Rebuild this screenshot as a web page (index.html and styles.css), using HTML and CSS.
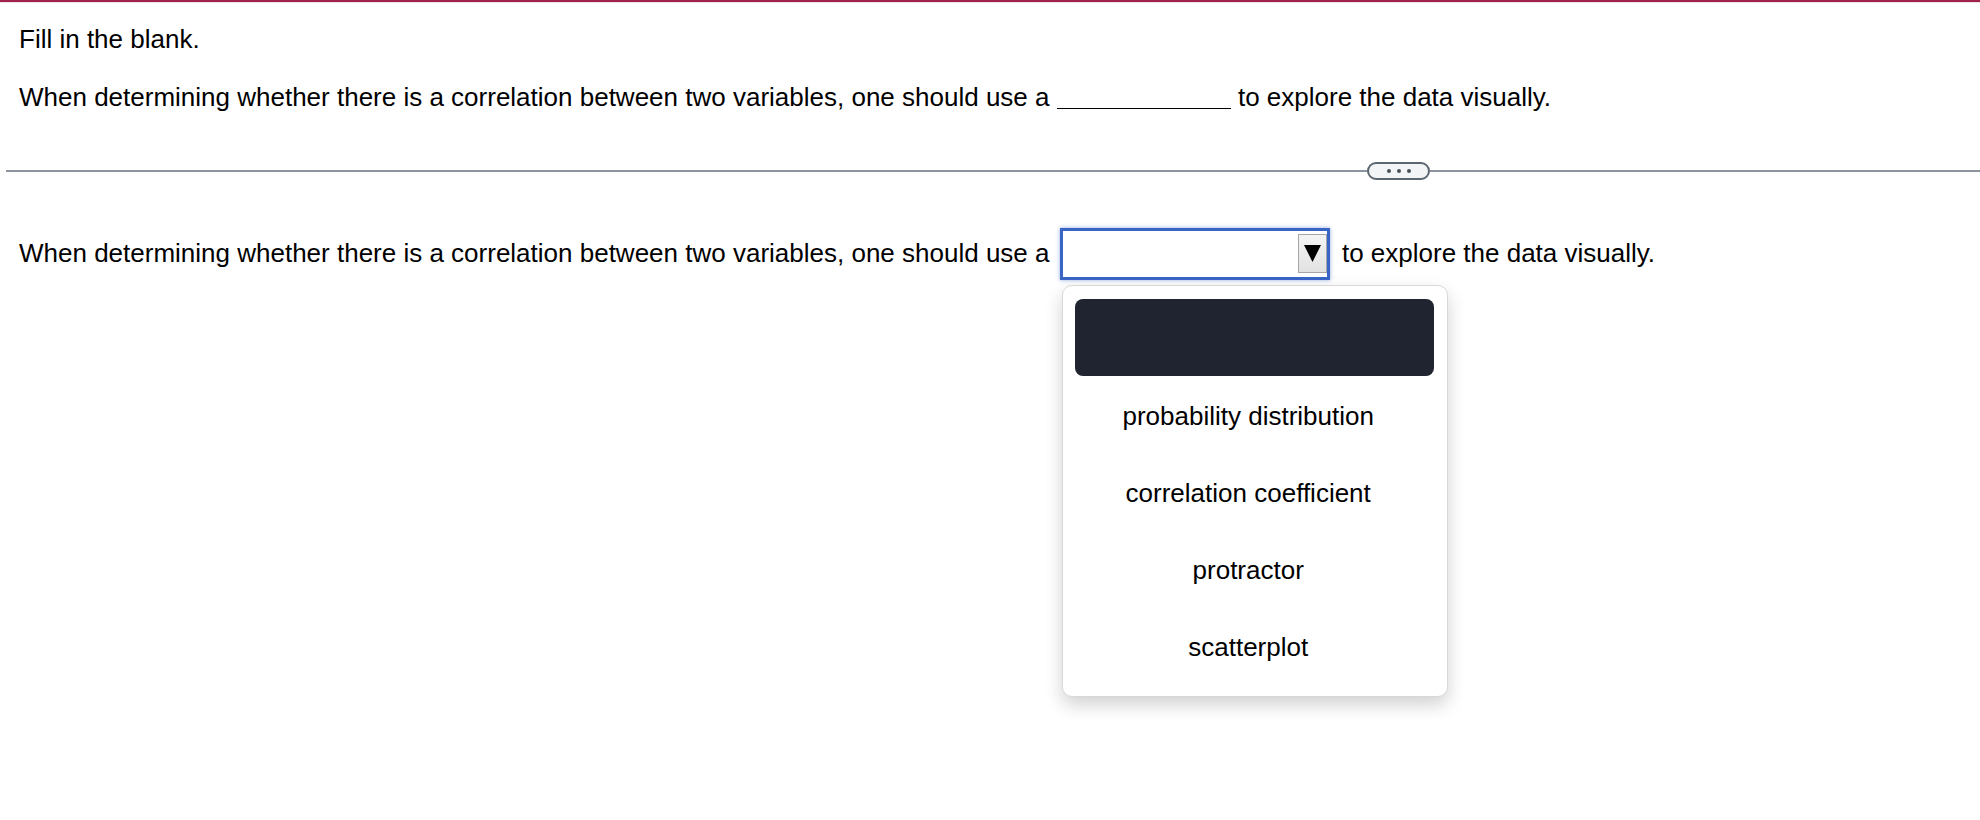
FILE: index.html
```html
<!DOCTYPE html>
<html lang="en">
<head>
<meta charset="utf-8">
<title>Fill in the blank</title>
<link rel="stylesheet" href="styles.css">
</head>
<body>
<div class="topbar"></div>
<main class="content">
  <p class="instr">Fill in the blank.</p>
  <p class="q1">When determining whether there is a correlation between two variables, one should use a <span class="blank"></span> to explore the data visually.</p>
</main>
<div class="divider">
  <div class="line line-left"></div>
  <button class="pill" type="button" aria-label="more"><span class="dot"></span><span class="dot"></span><span class="dot"></span></button>
  <div class="line line-right"></div>
</div>
<main class="content">
  <p class="q2">When determining whether there is a correlation between two variables, one should use a <span class="select-wrap"><span class="select"><span class="select-btn"><svg width="19" height="19" viewBox="0 0 19 19"><polygon points="1,1 18,1 9.5,18" fill="#000"/></svg></span></span><span class="menu"><span class="item item-active"></span><span class="item">probability distribution</span><span class="item">correlation coefficient</span><span class="item">protractor</span><span class="item">scatterplot</span></span></span> to explore the data visually.</p>
</main>
</body>
</html>
```

FILE: styles.css
```css
html, body {
  margin: 0;
  padding: 0;
  background: #ffffff;
}
body {
  font-family: "Liberation Sans", Arial, Helvetica, sans-serif;
  font-size: 26px;
  color: #000;
  width: 1980px;
  height: 820px;
  overflow: hidden;
}
.topbar {
  height: 2px;
  background: #a3214d;
  border-bottom: 1px solid #e6e6e6;
}
.content {
  display: block;
  padding: 0 19px;
}
.instr {
  margin: 21px 0 0;
  line-height: 30px;
}
.q1 {
  margin: 28px 0 0;
  line-height: 30px;
}
.blank {
  display: inline-block;
  width: 174px;
  height: 1px;
  border-bottom: 1.6px solid #000;
  vertical-align: -3px;
}
.divider {
  display: flex;
  align-items: center;
  margin: 50px 0 0 6px;
  height: 18px;
}
.line {
  height: 1.6px;
  background: #8a939e;
}
.line-left {
  width: 1361px;
  flex: none;
}
.line-right {
  flex: 1;
}
.pill {
  flex: none;
  width: 63px;
  height: 18px;
  box-sizing: border-box;
  border: 2px solid #5b6670;
  border-radius: 9px;
  background: #f3f4f6;
  padding: 0;
  display: flex;
  align-items: center;
  justify-content: center;
  gap: 6px;
}
.dot {
  width: 4px;
  height: 4px;
  border-radius: 50%;
  background: #4a5058;
}
.q2 {
  margin: 47px 0 0;
  line-height: 52px;
}
.select-wrap {
  position: relative;
  display: inline-block;
  vertical-align: middle;
  margin: -3px 5px 0 3px;
  height: 52px;
}
.select {
  display: flex;
  justify-content: flex-end;
  align-items: center;
  box-sizing: border-box;
  width: 270px;
  height: 52px;
  border: 3px solid #3b65c5;
  box-shadow: 0 0 4px rgba(59, 101, 197, 0.55);
  background: #fff;
}
.select-btn {
  display: flex;
  align-items: center;
  justify-content: center;
  box-sizing: border-box;
  width: 29px;
  height: 39px;
  margin-top: -1px;
  border: 1px solid #a6a6a6;
  background: linear-gradient(#f4f4f4, #e2e2e2);
}
.menu {
  position: absolute;
  left: 2px;
  top: 57px;
  width: 386px;
  box-sizing: border-box;
  padding: 13px 13px 10px 12px;
  background: #fff;
  border: 1px solid #d8d8d8;
  border-radius: 10px;
  box-shadow: 0 8px 18px rgba(0, 0, 0, 0.18);
  display: flex;
  flex-direction: column;
  line-height: normal;
  z-index: 2;
}
.item {
  display: flex;
  align-items: center;
  justify-content: center;
  height: 77px;
  padding-right: 12px;
  font-size: 26px;
  color: #000;
}
.item-active {
  background: #1f2430;
  border-radius: 8px;
  margin-bottom: 2px;
  padding-right: 0;
}
```
